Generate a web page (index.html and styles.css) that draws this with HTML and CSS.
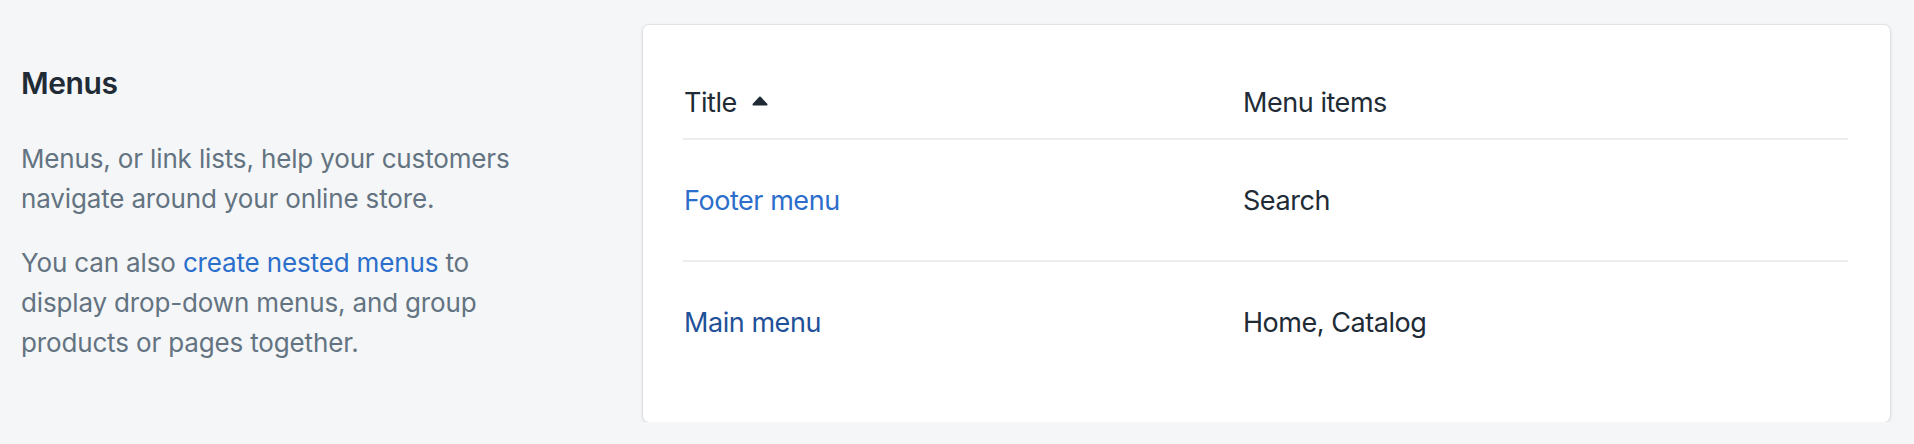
FILE: index.html
```html
<!DOCTYPE html>
<html lang="en">
<head>
<meta charset="utf-8">
<title>Menus</title>
<link rel="stylesheet" href="styles.css">
</head>
<body>
<div class="page">
  <section class="annotated">
    <div class="annotation">
      <h2 class="heading">Menus</h2>
      <div class="text">
        <p>Menus, or link lists, help your customers navigate around your online store.</p>
        <p>You can also <a class="link" href="#">create nested menus</a> to display drop-down menus, and group products or pages together.</p>
      </div>
    </div>
    <div class="card">
      <div class="table">
        <div class="row row-head">
          <div class="cell cell-head cell-sort"><span>Title</span><svg class="caret" width="16" height="10" viewBox="0 0 16 10" aria-hidden="true"><path d="M8 1.5 L14.5 8.5 H1.5 Z" fill="#212b36" stroke="#212b36" stroke-width="2" stroke-linejoin="round"/></svg></div>
          <div class="cell cell-head">Menu items</div>
        </div>
        <div class="row">
          <div class="cell"><a class="link" href="#">Footer menu</a></div>
          <div class="cell">Search</div>
        </div>
        <div class="row row-last">
          <div class="cell"><a class="link link-visited" href="#">Main menu</a></div>
          <div class="cell">Home, Catalog</div>
        </div>
      </div>
    </div>
  </section>
</div>
</body>
</html>
```

FILE: styles.css
```css
html, body {
  margin: 0;
  padding: 0;
}
body {
  background: #f4f6f8;
  font-family: Inter, "Noto Sans", "Liberation Sans", sans-serif;
  color: #212b36;
}
.annotated {
  display: flex;
  align-items: flex-start;
  padding: 25px 24px 0 0;
}
.annotation {
  flex: 0 0 622px;
  padding-left: 21px;
  padding-top: 34px;
}
.heading {
  margin: 0;
  font-size: 30px;
  line-height: 48px;
  font-weight: 600;
  letter-spacing: -0.4px;
  color: #212b36;
}
.text {
  margin-top: 32px;
  width: 500px;
  font-size: 26px;
  line-height: 40px;
  letter-spacing: -0.15px;
  color: #637381;
}
.text p {
  margin: 0;
}
.text p + p {
  margin-top: 24px;
}
.link {
  color: #2c6ecb;
  text-decoration: none;
}
.link-visited {
  color: #1f5199;
}
.card {
  flex: 1;
  background: #fff;
  border-radius: 6px;
  box-shadow: 0 0 0 1px rgba(63, 63, 68, 0.07), 0 1px 4px rgba(63, 63, 68, 0.14);
  padding: 41px 42px 40px 40px;
}
.row {
  display: grid;
  grid-template-columns: 559px 1fr;
  border-bottom: 2px solid #ebedef;
}
.row-last {
  border-bottom: none;
}
.cell {
  padding: 41px 0 39px 1px;
  font-size: 27px;
  line-height: 40px;
  letter-spacing: -0.45px;
  color: #212b36;
}
.cell-head {
  padding-top: 17px;
  padding-bottom: 15px;
}
.cell-sort {
  display: flex;
  align-items: center;
  gap: 15px;
}
.caret {
  display: block;
  margin-top: -4px;
}
```
